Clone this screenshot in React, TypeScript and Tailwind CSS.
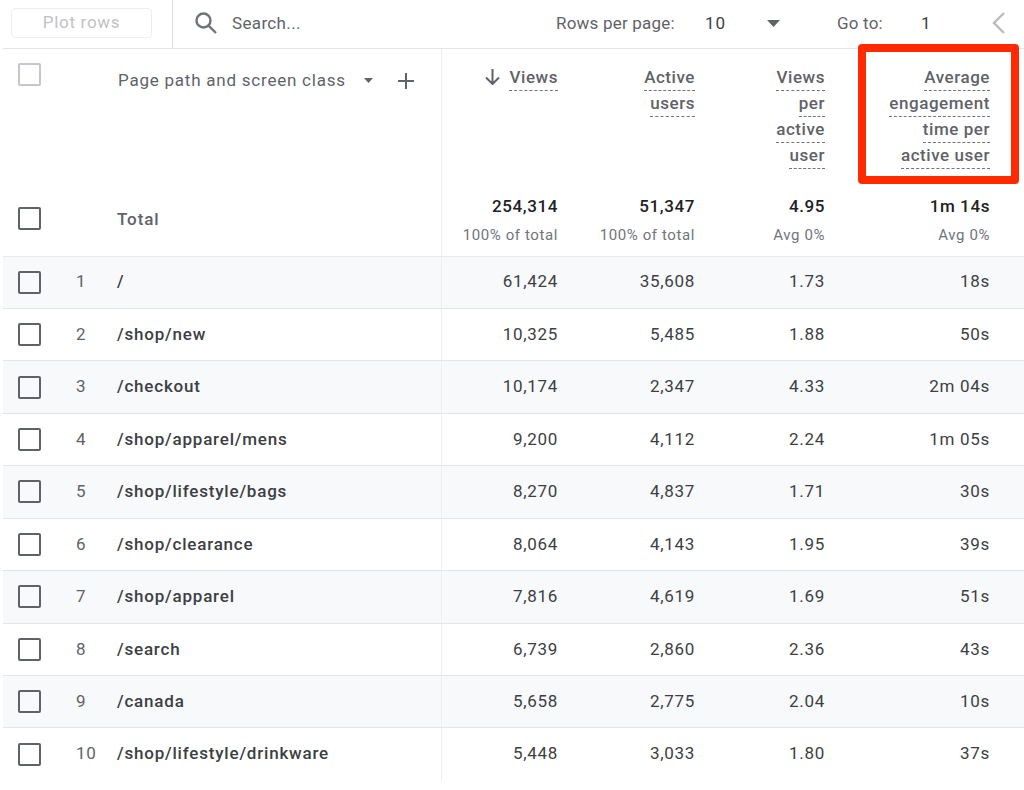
import React from 'react';

const rows = [
  ['/', '61,424', '35,608', '1.73', '18s'],
  ['/shop/new', '10,325', '5,485', '1.88', '50s'],
  ['/checkout', '10,174', '2,347', '4.33', '2m 04s'],
  ['/shop/apparel/mens', '9,200', '4,112', '2.24', '1m 05s'],
  ['/shop/lifestyle/bags', '8,270', '4,837', '1.71', '30s'],
  ['/shop/clearance', '8,064', '4,143', '1.95', '39s'],
  ['/shop/apparel', '7,816', '4,619', '1.69', '51s'],
  ['/search', '6,739', '2,860', '2.36', '43s'],
  ['/canada', '5,658', '2,775', '2.04', '10s'],
  ['/shop/lifestyle/drinkware', '5,448', '3,033', '1.80', '37s'],
];

const headers = [
  { w: 'w-[116px]', lines: ['Views'], sorted: true },
  { w: 'w-[137px]', lines: ['Active', 'users'] },
  { w: 'w-[130px]', lines: ['Views', 'per', 'active', 'user'] },
  { w: 'w-[165px]', lines: ['Average', 'engagement', 'time per', 'active user'] },
];

const totals = [
  { w: 'w-[116px]', value: '254,314', sub: '100% of total' },
  { w: 'w-[137px]', value: '51,347', sub: '100% of total' },
  { w: 'w-[130px]', value: '4.95', sub: 'Avg 0%' },
  { w: 'w-[165px]', value: '1m 14s', sub: 'Avg 0%' },
];

const widths = ['w-[116px]', 'w-[137px]', 'w-[130px]', 'w-[165px]'];

const Checkbox = ({ light }: { light?: boolean }) => (
  <div
    className={`h-[23px] w-[23px] shrink-0 rounded-[2px] border-2 ${
      light ? 'border-[#c4c6c9]' : 'border-[#5f6368]'
    }`}
  />
);

const App = () => {
  return (
    <div
      className="relative h-[790px] w-[1024px] overflow-hidden bg-white pl-[3px] text-[17px] text-[#5f6368]"
      style={{ fontFamily: 'Roboto, sans-serif' }}
    >
      {/* toolbar */}
      <div className="flex h-[49px] items-center border-b border-[#e3e5e8]">
        <div className="flex h-full w-[170px] shrink-0 items-center border-r border-[#dadce0] pb-[3px] pl-[8px]">
          <div className="flex h-[30px] w-[141px] items-center justify-center rounded-[4px] border border-[#eceef0] pt-[1px] tracking-[0.7px] text-[#c0c2c5]">
            Plot rows
          </div>
        </div>
        <svg className="ml-[21px] mb-[2px] h-[24px] w-[24px] shrink-0" viewBox="0 0 24 24" fill="none" stroke="#6f7377" strokeWidth="2.4">
          <circle cx="9.5" cy="9.5" r="7" />
          <path d="M14.6 14.6 22 22" />
        </svg>
        <span className="ml-[14px] w-[324px] tracking-[0.35px]">Search...</span>
        <span className="w-[149px] tracking-[0.2px]">Rows per page:</span>
        <span className="w-[62px] tracking-[1px] text-[#3c4043]">10</span>
        <svg className="mb-[1px] h-[7px] w-[13px] shrink-0" viewBox="0 0 13 7" fill="#5f6368">
          <path d="M0 0h13L6.500 7z" />
        </svg>
        <span className="ml-[57px] w-[84px] tracking-[0.2px]">Go to:</span>
        <span className="w-[71px] text-[#3c4043]">1</span>
        <svg className="mb-[2px] h-[22px] w-[13px] shrink-0" viewBox="0 0 13 22" fill="none" stroke="#b9bbbe" strokeWidth="2.4">
          <path d="M12 1 2 11l10 10" />
        </svg>
      </div>

      {/* column headers */}
      <div className="flex h-[140px]">
        <div className="flex w-[439px] shrink-0 border-r border-[#eceef0]">
          <div className="pl-[15px] pt-[14px]">
            <Checkbox light />
          </div>
          <div className="ml-[77px] flex h-fit items-center pt-[19px]">
            <span className="tracking-[0.77px]">Page path and screen class</span>
            <svg className="ml-[18px] h-[5px] w-[9px]" viewBox="0 0 9 5" fill="#5f6368">
              <path d="M0 0h9L4.500 5z" />
            </svg>
            <svg className="ml-[25px] h-[16px] w-[16px]" viewBox="0 0 16 16" fill="none" stroke="#5f6368" strokeWidth="2">
              <path d="M8 0v16M0 8h16" />
            </svg>
          </div>
        </div>
        {headers.map((h) => (
          <div key={h.lines.join()} className={`${h.w} flex shrink-0 flex-col items-end pt-[16px] font-medium tracking-[0.55px]`}>
            {h.lines.map((line, i) => (
              <div key={line} className="flex h-[26px] items-start">
                {h.sorted && i === 0 && (
                  <svg className="mr-[9px] mt-[4px] h-[16px] w-[15px]" viewBox="0 0 15 16" fill="none" stroke="#5f6368" strokeWidth="2">
                    <path d="M7.500 0v15M1 8.500l6.500 6.500L14 8.500" />
                  </svg>
                )}
                <span className="h-[26px] border-b border-dashed border-[#70757a] leading-[24px]">{line}</span>
              </div>
            ))}
          </div>
        ))}
      </div>

      {/* totals */}
      <div className="flex h-[67.5px] border-b border-[#e8eaed]">
        <div className="flex w-[439px] shrink-0 items-center border-r border-[#eceef0] pb-[7px] pl-[15px]">
          <Checkbox />
          <span className="ml-[76px] mt-[2px] font-medium tracking-[0.9px]">Total</span>
        </div>
        {totals.map((t) => (
          <div key={t.value} className={`${t.w} shrink-0 pt-[5px] text-right`}>
            <div className="font-medium leading-[24px] tracking-[0.6px] text-[#202124]">{t.value}</div>
            <div className="mt-[7px] text-[15px] leading-[20px] tracking-[0.6px] text-[#70757a]">{t.sub}</div>
          </div>
        ))}
      </div>

      {/* rows */}
      {rows.map((row, i) => (
        <div
          key={row[0]}
          className={`flex ${i % 2 === 0 ? 'bg-[#f8f9fa]' : 'bg-white'} ${i < 9 ? 'h-[52.44px] border-b border-[#e3e5e8]' : 'h-[51.5px]'}`}
        >
          <div className="flex w-[439px] shrink-0 items-center border-r border-[#eceef0] pl-[15px]">
            <Checkbox />
            <span className="ml-[35px] w-[41px] tracking-[0.75px]">{i + 1}</span>
            <span className="font-medium tracking-[0.8px] text-[#3c4043]">{row[0]}</span>
          </div>
          {row.slice(1).map((cell, j) => (
            <div key={j} className={`${widths[j]} flex shrink-0 items-center justify-end tracking-[0.7px] text-[#3c4043]`}>
              {cell}
            </div>
          ))}
        </div>
      ))}

      {/* red highlight */}
      <div className="absolute left-[858px] top-[44px] h-[140px] w-[161px] rounded-[4px] border-[8px] border-[#ff2a00]" />
    </div>
  );
};

export default App;
